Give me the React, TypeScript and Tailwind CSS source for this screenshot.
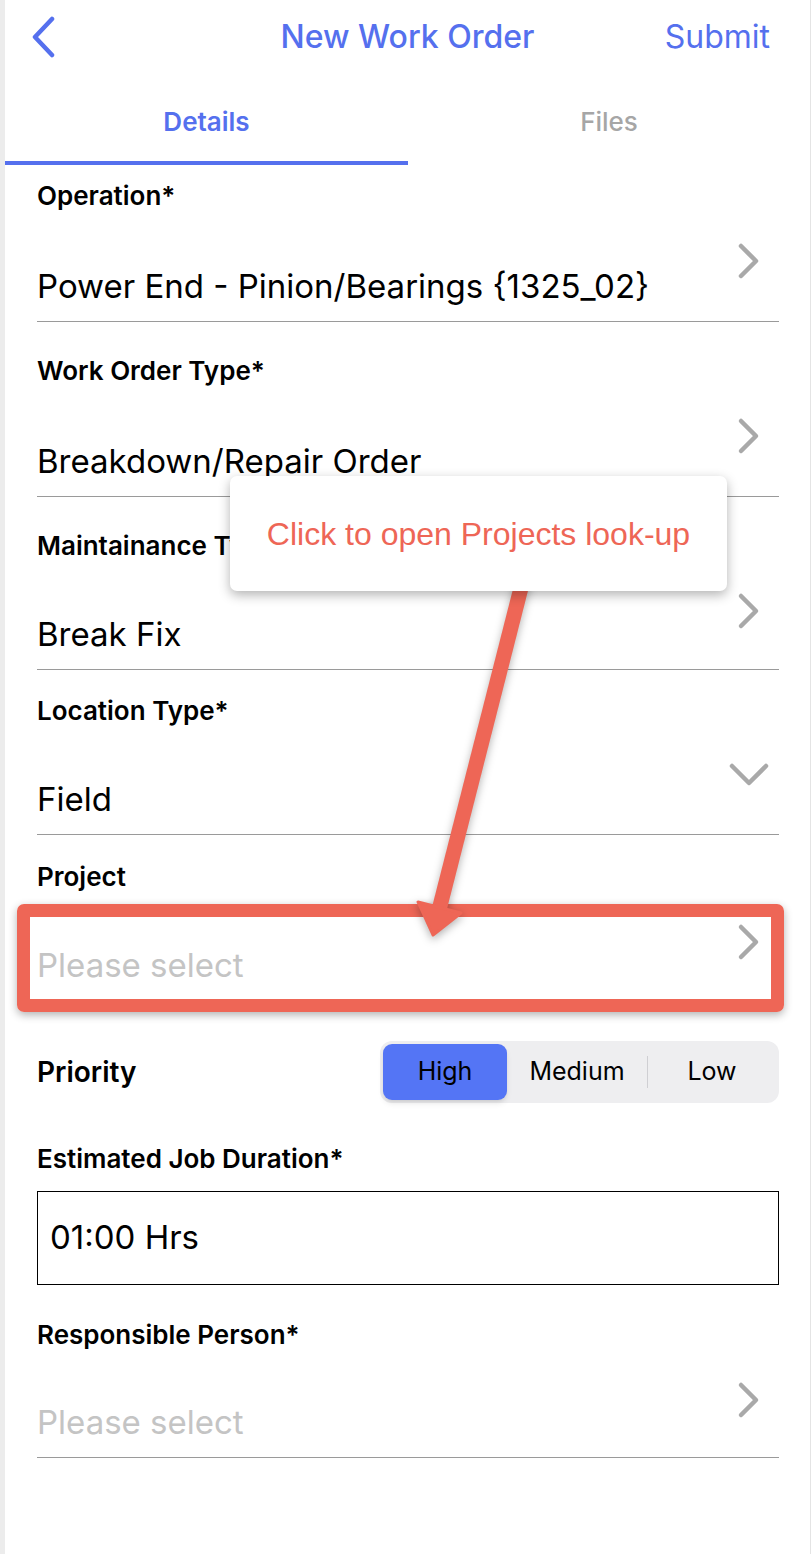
import React from 'react';

const ChevronRight: React.FC<{ className?: string }> = ({ className }) => (
  <svg className={className} width="24" height="38" viewBox="0 0 24 38" fill="none">
    <path d="M4 4l15 15L4 34" stroke="#a9a9a9" strokeWidth={4.5} strokeLinecap="round" strokeLinejoin="round" />
  </svg>
);

const ChevronDown: React.FC<{ className?: string }> = ({ className }) => (
  <svg className={className} width="40" height="24" viewBox="0 0 40 24" fill="none">
    <path d="M3 4l17 17L37 4" stroke="#a9a9a9" strokeWidth={4.5} strokeLinecap="round" strokeLinejoin="round" />
  </svg>
);

type FieldProps = {
  label: string;
  value: string;
  placeholder?: boolean;
  top: string;
  row: string;
  icon?: 'right' | 'down';
};

const Field: React.FC<FieldProps> = ({ label, value, placeholder, top, row, icon = 'right' }) => (
  <div className={top}>
    <div className="text-[26px] leading-[30px] font-semibold text-black">{label}</div>
    <div className={`${row} flex justify-between border-b border-[#9a9a9a]`}>
      <div className={`self-end pb-[15px] text-[33px] leading-[40px] whitespace-nowrap ${placeholder ? 'text-[#c4c4c4]' : 'text-black'}`}>
        {value}
      </div>
      {icon === 'right' ? (
        <ChevronRight className="mt-[31px] mr-[18px] shrink-0" />
      ) : (
        <ChevronDown className="mt-[36px] mr-[10px] shrink-0" />
      )}
    </div>
  </div>
);

export default function App() {
  return (
    <div className="relative w-[812px] h-[1554px] bg-white flex font-['Inter',sans-serif] overflow-hidden">
      <div className="w-[5px] bg-[#ececec] shrink-0" />
      <div className="w-[806px] border-r border-[#e4e4e4] flex flex-col">
        {/* header */}
        <div className="h-[74px] flex items-center justify-between pl-[24px] pr-[40px] relative">
          <svg width="28" height="42" viewBox="0 0 28 42" fill="none">
            <path d="M23 3L6 21l17 18" stroke="#5570ee" strokeWidth={4.5} strokeLinecap="round" strokeLinejoin="round" />
          </svg>
          <div className="absolute left-0 right-0 text-center text-[32px] font-medium text-[#5570ee] pointer-events-none">
            New Work Order
          </div>
          <div className="text-[32px] text-[#5570ee]">Submit</div>
        </div>

        {/* tabs */}
        <div className="h-[91px] flex">
          <div className="w-[403px] flex flex-col">
            <div className="flex-1 flex items-center justify-center pt-[8px] text-[26px] font-semibold text-[#5570ee]">Details</div>
            <div className="h-[4px] bg-[#5570ee]" />
          </div>
          <div className="flex-1 flex flex-col">
            <div className="flex-1 flex items-center justify-center pt-[8px] text-[26px] font-medium text-[#a6a6a6]">Files</div>
            <div className="h-[4px]" />
          </div>
        </div>

        {/* form */}
        <div className="ml-[32px] w-[742px] flex flex-col">
          <Field top="pt-[16px]" row="h-[111px]" label="Operation*" value="Power End - Pinion/Bearings {1325_02}" />
          <Field top="pt-[34px]" row="h-[111px]" label="Work Order Type*" value="Breakdown/Repair Order" />
          <Field top="pt-[34px]" row="h-[109px]" label="Maintainance Type*" value="Break Fix" />
          <Field top="pt-[26px]" row="h-[109px]" label="Location Type*" value="Field" icon="down" />
          <Field top="pt-[27px]" row="h-[109px]" label="Project" value="Please select" placeholder />

          <div className="mt-[40px] flex items-center justify-between">
            <div className="text-[28px] font-semibold text-black">Priority</div>
            <div className="w-[399px] h-[62px] rounded-[12px] bg-[#eeeef0] p-[3px] flex items-center text-[25px] text-black">
              <div className="w-[124px] h-[56px] rounded-[9px] bg-[#5475f5] shadow-md flex items-center justify-center">High</div>
              <div className="w-[140px] flex items-center justify-center">Medium</div>
              <div className="w-px h-[32px] bg-[#cfcfd3]" />
              <div className="flex-1 flex items-center justify-center">Low</div>
            </div>
          </div>

          <div className="pt-[41px] text-[26px] leading-[30px] font-semibold text-black">Estimated Job Duration*</div>
          <div className="mt-[17px] h-[94px] border-[1.5px] border-black flex items-center pl-[12px] text-[33px] text-black">
            01:00 Hrs
          </div>

          <Field top="pt-[35px]" row="h-[108px]" label="Responsible Person*" value="Please select" placeholder />
        </div>
      </div>

      {/* annotation: highlight box */}
      <div className="absolute left-[17px] top-[904px] w-[767px] h-[108px] border-[13px] border-[#ee6656] rounded-[7px] shadow-[0_3px_8px_rgba(0,0,0,0.3)]" />

      {/* annotation: arrow */}
      <svg className="absolute left-0 top-0 drop-shadow-[0_3px_4px_rgba(0,0,0,0.3)]" width="812" height="1554" viewBox="0 0 812 1554">
        <line x1="523" y1="580" x2="439" y2="910" stroke="#ee6656" strokeWidth={15} />
        <polygon points="418,902 461,913 433,935" fill="#ee6656" stroke="#ee6656" strokeWidth={3} strokeLinejoin="round" />
      </svg>

      {/* annotation: tooltip */}
      <div className="absolute left-[230px] top-[476px] w-[497px] h-[115px] bg-white rounded-[7px] shadow-[0_4px_12px_rgba(0,0,0,0.3)] flex items-center justify-center text-[32px] text-[#ee6656] font-['Liberation_Sans',Arial,sans-serif]">
        Click to open Projects look-up
      </div>
    </div>
  );
}
